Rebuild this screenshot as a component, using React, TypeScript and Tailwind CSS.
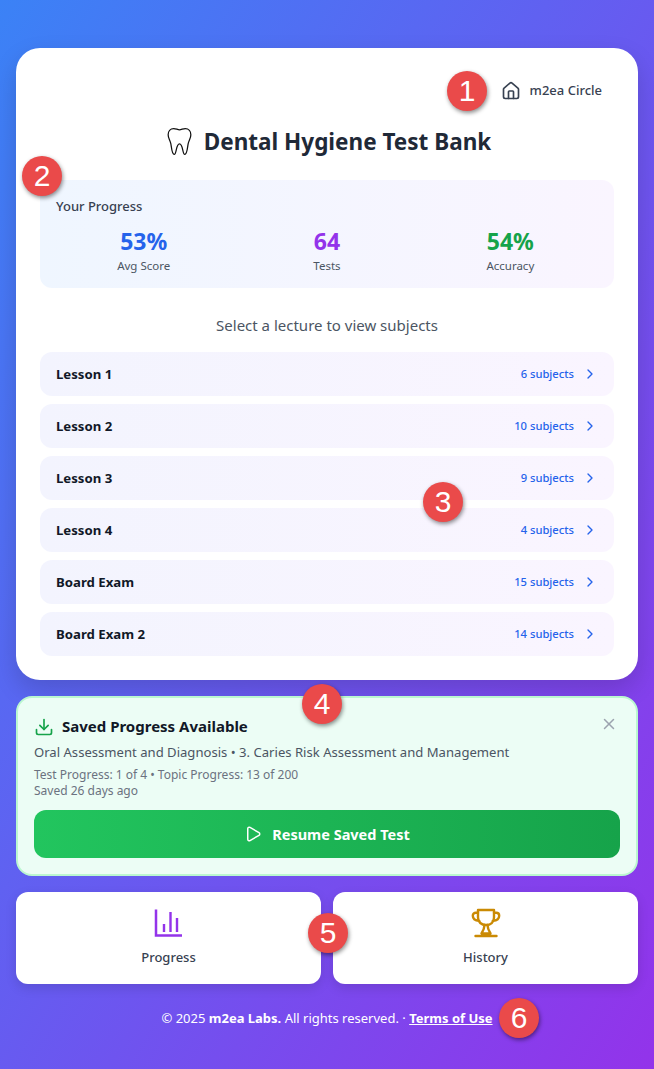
import { ChevronRight, Download, House, Play, X } from "lucide-react"

const lessons = [
  { name: "Lesson 1", count: 6 },
  { name: "Lesson 2", count: 10 },
  { name: "Lesson 3", count: 9 },
  { name: "Lesson 4", count: 4 },
  { name: "Board Exam", count: 15 },
  { name: "Board Exam 2", count: 14 },
]

function Badge({ n, className }: { n: number; className: string }) {
  return (
    <div
      className={`absolute z-10 flex h-10 w-10 items-center justify-center rounded-full bg-[#ea4a4a] text-[30px] leading-none text-white shadow-[1px_2px_4px_rgba(0,0,0,0.45)] font-['Liberation_Sans',sans-serif] ${className}`}
    >
      {n}
    </div>
  )
}

function Stat({ value, label, color }: { value: string; label: string; color: string }) {
  return (
    <div className="text-center">
      <div className={`text-[23px] font-bold leading-[30px] pb-[2px] ${color}`}>{value}</div>
      <div className="text-[11.5px] leading-[15px] pb-px text-[#4b5563]">{label}</div>
    </div>
  )
}

function ToothIcon() {
  return (
    <svg width="25" height="29" viewBox="0 0 26 30" fill="none" stroke="#111" strokeWidth="1.3" strokeLinejoin="round">
      <path d="M7 1.5c2.3 0 4 1.3 6 1.3s3.700-1.300 6-1.300c3.600 0 5.800 2.800 5.800 6.400 0 3.500-1.800 5.600-2.700 9-.8 3.200-1 11.600-3.600 11.600-2.500 0-1.700-10.900-5.500-10.900s-3 10.900-5.500 10.900c-2.600 0-2.800-8.400-3.600-11.600-.9-3.400-2.700-5.500-2.700-9 0-3.600 2.200-6.400 5.800-6.400z" />
    </svg>
  )
}

function BarsIcon() {
  return (
    <svg width="30" height="30" viewBox="0 0 30 30" fill="none" stroke="#9333ea">
      <path d="M2 1.500V27.500H28" strokeWidth="2.500" />
      <path d="M10 16v8M16.500 4v20M23 10v14" strokeWidth="2.400" />
    </svg>
  )
}

function TrophyIcon() {
  return (
    <svg width="30" height="30" viewBox="0 0 30 30" fill="none" stroke="#ca8a04" strokeWidth="2.400" strokeLinejoin="round" strokeLinecap="round">
      <path d="M7 2h16v7.500c0 4.700-3.400 7.500-8 7.500s-8-2.800-8-7.500z" />
      <path d="M7 4.800H4.800C2.900 4.800 1.800 6 1.800 7.700c0 3 2.700 4.800 6.500 5.200M23 4.800h2.200c1.900 0 3 1.200 3 2.900 0 3-2.700 4.800-6.500 5.200" />
      <path d="M13.500 17c0 3-.8 5-3 8.500h9c-2.200-3.500-3-5.500-3-8.500M4.500 28h21" />
    </svg>
  )
}

export default function App() {
  return (
    <div className="relative min-h-[1069px] bg-linear-to-br/srgb from-[#3b82f6] to-[#9333ea] px-4 pt-12 font-['Noto_Sans','Open_Sans',sans-serif]">
      <Badge n={1} className="left-[447px] top-[71px]" />
      <Badge n={2} className="left-[22px] top-[156px]" />
      <Badge n={3} className="left-[423px] top-[482px]" />
      <Badge n={4} className="left-[302px] top-[684px]" />
      <Badge n={5} className="left-[308px] top-[913px]" />
      <Badge n={6} className="left-[499px] top-[998px]" />

      <div className="rounded-3xl bg-white p-6 shadow-[0_10px_25px_rgba(0,0,0,0.15)]">
        <div className="flex h-[37px] items-center justify-end gap-[9px] pr-3">
          <House size={20} strokeWidth={2} className="text-[#374151]" />
          <span className="text-[13px] font-medium text-[#374151]">m2ea Circle</span>
        </div>
        <div className="mt-4 flex h-8 items-center justify-center gap-3 pl-1">
          <ToothIcon />
          <h1 className="pt-[2px] text-[22.5px] font-bold leading-8 text-[#1f2937]">Dental Hygiene Test Bank</h1>
        </div>
        <div className="mt-[23px] rounded-xl bg-linear-to-r/srgb from-[#eff6ff] to-[#faf5ff] px-4 pb-[14px] pt-4">
          <div className="text-[13px] font-medium leading-5 text-[#374151]">Your Progress</div>
          <div className="mt-[10px] grid grid-cols-3 gap-2">
            <Stat value="53%" label="Avg Score" color="text-[#2563eb]" />
            <Stat value="64" label="Tests" color="text-[#9333ea]" />
            <Stat value="54%" label="Accuracy" color="text-[#16a34a]" />
          </div>
        </div>
        <p className="mt-6 text-center text-[15px] leading-[26px] pb-0 text-[#4b5563]">Select a lecture to view subjects</p>
        <div className="mt-[14px] flex flex-col gap-2">
          {lessons.map((l) => (
            <div key={l.name} className="flex h-11 items-center justify-between rounded-xl bg-linear-to-r/srgb from-[#f3f4fe] to-[#faf5ff] px-4">
              <span className="pt-[2px] text-[13.2px] font-bold text-[#111827]">{l.name}</span>
              <div className="flex items-center gap-2">
                <span className="pt-px text-[11.2px] font-medium text-[#2563eb]">{l.count} subjects</span>
                <ChevronRight size={16} className="text-[#2563eb]" />
              </div>
            </div>
          ))}
        </div>
      </div>

      <div className="relative mt-4 rounded-2xl border-2 border-[#bbf7d0] bg-[#ecfdf5] px-4 pb-4 pt-[17px]">
        <X size={18} className="absolute right-[18px] top-[17px] text-[#9ca3af]" />
        <div className="flex items-center gap-2">
          <Download size={20} className="text-[#16a34a]" />
          <span className="pb-[2px] text-[15px] font-bold leading-[22px] text-[#111827]">Saved Progress Available</span>
        </div>
        <p className="mt-[3px] text-[13.1px] leading-5 text-[#4b5563]">Oral Assessment and Diagnosis • 3. Caries Risk Assessment and Management</p>
        <div className="mt-[5px] text-xs leading-4 text-[#6b7280]">
          <div>Test Progress: 1 of 4 • Topic Progress: 13 of 200</div>
          <div>Saved 26 days ago</div>
        </div>
        <div className="mt-[11px] flex h-12 items-center justify-center gap-[10px] rounded-xl bg-linear-to-r/srgb from-[#22c55e] to-[#16a34a] text-white">
          <Play size={18} />
          <span className="pt-px text-[14.5px] font-bold">Resume Saved Test</span>
        </div>
      </div>

      <div className="mt-4 grid grid-cols-2 gap-3">
        <div className="flex h-[92px] flex-col items-center justify-center gap-[10px] rounded-xl bg-white shadow-[0_4px_12px_rgba(0,0,0,0.12)]">
          <BarsIcon />
          <span className="text-[13px] font-medium text-[#374151]">Progress</span>
        </div>
        <div className="flex h-[92px] flex-col items-center justify-center gap-[10px] rounded-xl bg-white shadow-[0_4px_12px_rgba(0,0,0,0.12)]">
          <TrophyIcon />
          <span className="text-[13px] font-medium text-[#374151]">History</span>
        </div>
      </div>

      <p className="mt-[24px] text-center text-[13px] leading-5 text-white">
        © 2025 <span className="font-bold">m2ea Labs.</span> All rights reserved. · <span className="font-bold underline">Terms of Use</span>
      </p>
    </div>
  )
}
